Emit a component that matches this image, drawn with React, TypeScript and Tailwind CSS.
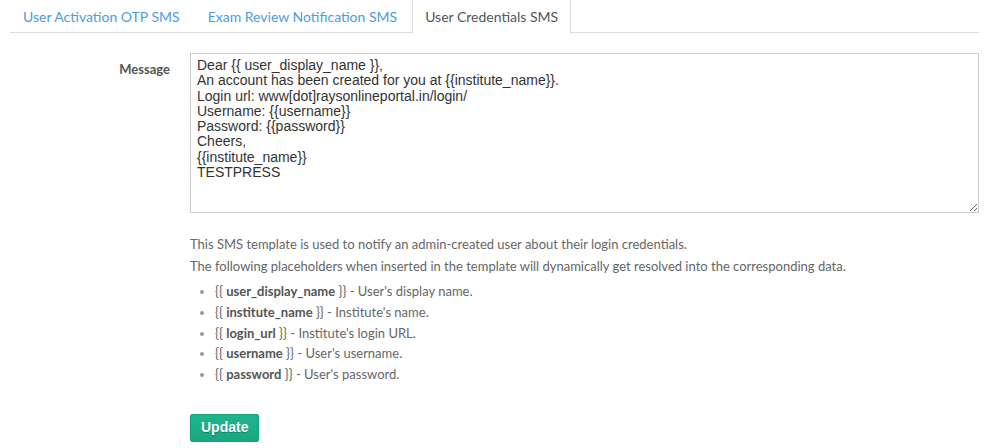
import React from 'react';

const tabs = [
  { label: 'User Activation OTP SMS', active: false },
  { label: 'Exam Review Notification SMS', active: false },
  { label: 'User Credentials SMS', active: true },
];

const message = `Dear {{ user_display_name }},
An account has been created for you at {{institute_name}}.
Login url: www[dot]raysonlineportal.in/login/
Username: {{username}}
Password: {{password}}
Cheers,
{{institute_name}}
TESTPRESS`;

const placeholders = [
  { key: 'user_display_name', desc: "User's display name." },
  { key: 'institute_name', desc: "Institute's name." },
  { key: 'login_url', desc: "Institute's login URL." },
  { key: 'username', desc: "User's username." },
  { key: 'password', desc: "User's password." },
];

export default function App() {
  return (
    <div className="w-[1000px] h-[448px] overflow-hidden bg-white px-[10px] pr-[21px] font-['Lato','Open_Sans',sans-serif] text-[13px] text-[#555]">
      {/* Tabs */}
      <ul className="flex border-b border-[#ddd] h-[34px] -mt-px">
        {tabs.map((tab) => (
          <li key={tab.label} className="mr-[2px] -mb-px">
            <a
              href="#"
              className={
                tab.active
                  ? 'flex items-center h-[35px] px-[12px] text-[14px] text-[#555] bg-white border border-[#ddd] border-b-white'
                  : 'flex items-center h-[35px] px-[12px] text-[14px] text-[#4a9de0] border border-transparent'
              }
            >
              {tab.label}
            </a>
          </li>
        ))}
      </ul>

      {/* Form */}
      <div className="flex mt-[20px]">
        <label className="w-[160px] shrink-0 text-right font-bold text-[13px] text-[#555] pt-[7px]">
          Message
        </label>
        <div className="ml-[20px] flex-1">
          <textarea
            defaultValue={message}
            className="block w-full h-[160px] border border-[#ccc] px-[6px] py-[4px] font-['Liberation_Sans',Arial,sans-serif] text-[14px] leading-[15.3px] text-[#333] outline-none resize-y"
          />

          <div className="mt-[20px] text-[13px] leading-[22px] text-[#666]">
            <p>This SMS template is used to notify an admin-created user about their login credentials.</p>
            <p>The following placeholders when inserted in the template will dynamically get resolved into the corresponding data.</p>
          </div>

          <ul className="mt-[4px] list-disc pl-[25px] text-[13px] leading-[20.75px] text-[#666] marker:text-[#999]">
            {placeholders.map((p) => (
              <li key={p.key}>
                {'{{ '}
                <b className="text-[#555]">{p.key}</b>
                {' }}'} - {p.desc}
              </li>
            ))}
          </ul>

          <button className="mt-[29px] h-[28px] px-[10px] rounded-[2px] bg-gradient-to-b from-[#1fb58f] to-[#18a782] border border-[#17a07c] font-['Liberation_Sans',Arial,sans-serif] font-bold text-[14px] text-white [text-shadow:0_1px_1px_rgba(0,0,0,0.25)]">
            Update
          </button>
        </div>
      </div>
    </div>
  );
}
